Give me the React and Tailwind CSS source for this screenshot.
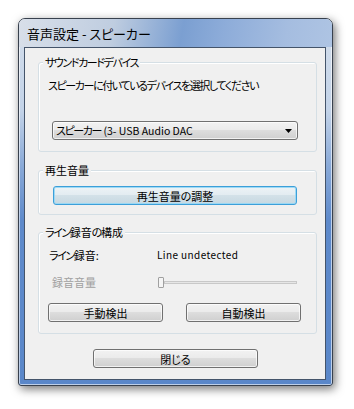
import React from "react";

const font = "font-['Noto_Sans_CJK_JP','Noto_Sans',sans-serif] [font-feature-settings:'palt']";

function K({ children }) {
  return <span className="tracking-[-1.4px]">{children}</span>;
}

function Btn({ children, className = "" }) {
  return (
    <div
      className={`h-[19px] rounded-[3px] border border-[#707070] bg-[linear-gradient(to_bottom,#f2f2f2_0%,#ebebeb_45%,#dddddd_50%,#cfcfcf_100%)] shadow-[inset_0_0_0_1px_rgba(255,255,255,0.7)] flex items-center justify-center text-[11px] leading-[16px] text-black ${className}`}
    >
      {children}
    </div>
  );
}

function Group({ label, className = "", children }) {
  return (
    <div className={`relative ml-[13px] w-[279px] rounded-[3px] border border-[#d5dfe5] shadow-[inset_1px_1px_0_#ffffff] ${className}`}>
      <span className="absolute top-[-9px] left-[4px] px-[2px] bg-[#f0f0f0] text-[11px] leading-[16px] text-black whitespace-nowrap">
        {label}
      </span>
      {children}
    </div>
  );
}

export default function App() {
  return (
    <div className={`w-[354px] h-[409px] bg-white pt-[18px] pl-[18px] ${font}`}>
      <div className="w-[315px] h-[368px] rounded-t-[7px] rounded-b-[3px] border border-[#38414e] overflow-hidden flex flex-col shadow-[2px_3px_10px_rgba(0,0,0,0.55),inset_0_0_0_1px_rgba(255,255,255,0.6)] bg-[linear-gradient(to_bottom,#d4deeb_0%,#c3d3e8_25%,#8aaad8_40%,#5e8acb_55%,#5a87c9_100%)]">
        <div className="h-[28px] shrink-0 flex items-center pl-[8px] pt-[1px] bg-[linear-gradient(100deg,#d8dfe9_0%,#bfcde0_30%,#7b9fd1_52%,#8dacd9_65%,#a5bde0_85%,#aec4e3_100%)]">
          <span className="text-[13px] leading-[16px] text-black">音声設定 - スピーカー</span>
        </div>
        <div className="flex-1 pl-[5px] pr-[6px] pb-[5px] flex flex-col">
          <div className="flex-1 border border-[#44546a] bg-[#f0f0f0] flex flex-col">
            <Group label={<K>サウンドカードデバイス</K>} className="mt-[14px] h-[90px]">
              <div className="mt-[14px] ml-[9px] text-[11px] leading-[16px] text-black tracking-[-1.4px] whitespace-nowrap">
                スピーカーに付いているデバイスを選択してください
              </div>
              <div className="mt-[28px] ml-[13px] w-[246px] h-[19px] rounded-[3px] border border-[#707070] bg-[linear-gradient(to_bottom,#f2f2f2_0%,#ebebeb_45%,#dddddd_50%,#cfcfcf_100%)] shadow-[inset_0_0_0_1px_rgba(255,255,255,0.7)] flex items-center pl-[3px] pr-[5px]">
                <span className="flex-1 text-[11px] leading-[16px] text-black whitespace-nowrap">
                  <K>スピーカー</K> <span className="text-[10.5px]">(3- USB Audio DAC</span>
                </span>
                <svg width="7" height="4" viewBox="0 0 7 4">
                  <path d="M0 0H7L3.5 4Z" fill="#000" />
                </svg>
              </div>
            </Group>
            <Group label="再生音量" className="mt-[18px] h-[45px]">
              <div className="mt-[15px] ml-[14px] w-[244px] h-[19px] rounded-[3px] border border-[#3c9fd9] bg-[linear-gradient(to_bottom,#edf3f6_0%,#e3ecf1_45%,#d3e1e8_50%,#c6d8e1_100%)] shadow-[inset_0_0_0_1px_rgba(150,215,245,0.9)] flex items-center justify-center text-[11px] leading-[16px] text-black">
                再生音量の調整
              </div>
            </Group>
            <Group label={<><K>ライン</K>録音<K>の</K>構成</>} className="mt-[17px] h-[102px]">
              <div className="mt-[14px] ml-[10px] flex items-center text-[11px] leading-[16px] text-black">
                <span className="w-[108px]"><K>ライン</K>録音:</span>
                <span className="text-[10px] tracking-[0.4px]">Line undetected</span>
              </div>
              <div className="mt-[11px] ml-[13px] flex items-center h-[16px]">
                <span className="w-[106px] text-[11px] leading-[16px] text-[#a0a0a0]">録音音量</span>
                <div className="w-[6px] h-[11px] rounded-[1px] border border-[#a0a0a0] bg-[#f4f4f4]" />
                <div className="w-[133px] h-[3px] border border-[#c8c8c8] bg-[#e6e6e6]" />
              </div>
              <div className="mt-[13px] ml-[9px] flex gap-[23px]">
                <Btn className="w-[115px]">手動検出</Btn>
                <Btn className="w-[115px]">自動検出</Btn>
              </div>
            </Group>
            <Btn className="mt-[15px] ml-[68px] w-[165px]">閉じる</Btn>
          </div>
        </div>
      </div>
    </div>
  );
}
